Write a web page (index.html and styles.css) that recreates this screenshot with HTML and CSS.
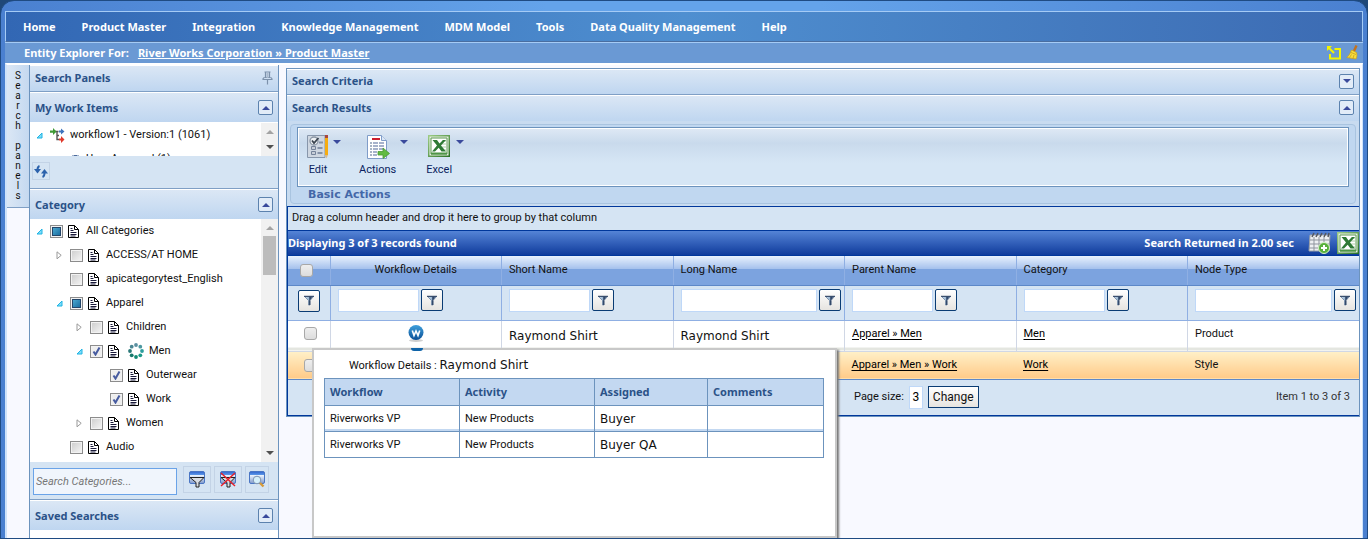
FILE: index.html
```html
<!DOCTYPE html>
<html lang="en">
<head>
<meta charset="utf-8">
<title>Entity Explorer</title>
<link rel="stylesheet" href="styles.css">
</head>
<body>
<svg class="defs" aria-hidden="true">
  <linearGradient id="gFunnel" x1="0" x2="1"><stop offset="0" stop-color="#c9dcee"/><stop offset=".45" stop-color="#9db8d2"/><stop offset=".6" stop-color="#1f3558"/><stop offset="1" stop-color="#8ba3c0"/></linearGradient>
  <linearGradient id="gBlue" x1="0" x2="0" y1="0" y2="1"><stop offset="0" stop-color="#3fa0dc"/><stop offset="1" stop-color="#0a4f96"/></linearGradient>
  <linearGradient id="gWin" x1="0" x2="0" y1="0" y2="1"><stop offset="0" stop-color="#2f62cc"/><stop offset=".3" stop-color="#5f9bea"/><stop offset=".32" stop-color="#eaf2fd"/><stop offset="1" stop-color="#7f98ca"/></linearGradient>
  <linearGradient id="gXl" x1="0" x2="1" y1="0" y2="1"><stop offset="0" stop-color="#9ccb85"/><stop offset="1" stop-color="#2c7327"/></linearGradient>
  <symbol id="doc" viewBox="0 0 11 13"><path d="M.5.5h6l4 4v8H.5z" fill="#fff" stroke="#000"/><path d="M6.500.5v4h4" fill="none" stroke="#000"/><path d="M2.500 3.500h2M2.500 5.500h3M2.500 7.500h6M2.500 9.500h6M2.500 11h5" stroke="#1a1a3a"/></symbol>
  <symbol id="open" viewBox="0 0 7 7"><path d="M6 1v5H1z" fill="#7fdcf8" stroke="#1fb4e4"/></symbol>
  <symbol id="closed" viewBox="0 0 7 9"><path d="M1 .8v7L5.200 4.300z" fill="#fff" stroke="#999"/></symbol>
  <symbol id="funnel" viewBox="0 0 12 11"><path d="M1.500 1.500h9L7 5.500V10H5.500V5.500z" fill="url(#gFunnel)" stroke="#5d7696" stroke-width=".7"/><path d="M1 1.300h10M6.800 5.500V10" stroke="#2a3f60"/></symbol>
  <symbol id="up" viewBox="0 0 8 4"><path d="M0 4l4-4 4 4z" fill="#3a4a9c"/></symbol>
  <symbol id="down" viewBox="0 0 8 4"><path d="M0 0h8L4 4z" fill="#3a4a9c"/></symbol>
  <symbol id="excel" viewBox="0 0 22 22"><path d="M.7.7h20.600v20.600H.7z" fill="#e5efe0" stroke="url(#gXl)" stroke-width="1.500"/><path d="M3 3h16v16H3z" fill="#fff" stroke="#5f9a55"/><path d="M14 6h5M14 9h5M14 12h5M14 15h5" stroke="#b0cfa8"/><path d="M4.500 5h4.500l2.500 3.500L15 5h3l-5 5.500 5 6h-4.500l-2.800-3.700L7 16.500H4l5-6z" fill="#2f7a35"/><path d="M3 17.500h16v2H3z" fill="#4e9547"/></symbol>
  <symbol id="win" viewBox="0 0 16 16"><rect x=".5" y=".5" width="15" height="12" rx="1.500" fill="url(#gWin)" stroke="#4a76c4"/></symbol>
  <symbol id="w" viewBox="0 0 16 17"><ellipse cx="8" cy="15.500" rx="7" ry="1.500" fill="#cfcfcf"/><circle cx="8" cy="7.500" r="7.500" fill="url(#gBlue)"/><path d="M4.300 5.500l1.700 5 2-4.500 2 4.500 1.700-5" fill="none" stroke="#fff" stroke-width="1.600"/></symbol>
</svg>

<div class="frame">
  <nav class="menu">
    <a href="#">Home</a><a href="#">Product Master</a><a href="#">Integration</a><a href="#">Knowledge Management</a><a href="#">MDM Model</a><a href="#">Tools</a><a href="#">Data Quality Management</a><a href="#">Help</a>
  </nav>
  <div class="crumbs">
    <span>Entity Explorer For:</span>
    <a href="#">River Works Corporation » Product Master</a>
    <div class="crumb-tools">
      <button aria-label="Restore window"><svg width="16" height="16" viewBox="0 0 16 16"><path d="M8.500 4H14v9.500H4V9" fill="none" stroke="#f4f400" stroke-width="2"/><path d="M3 3l5 5" stroke="#f4f400" stroke-width="2"/><path d="M1 1h5L1 6z" fill="#f4f400"/></svg></button>
      <button aria-label="Clear"><svg width="13" height="16" viewBox="0 0 13 16"><path d="M10.500.5L8 6" stroke="#c4711c" stroke-width="2.400"/><path d="M5.500 5l5 2.500c.8 2 .5 4.500-.5 6.500L.8 12.500C3 10.500 4.500 8 5.500 5z" fill="#f6dc3c" stroke="#cfa013" stroke-width=".7"/><path d="M5 7.500L10 9.500M3.500 12.500l2-3M7 13.500l1-3.500" stroke="#b98a12" stroke-width=".6"/></svg></button>
    </div>
  </div>

  <div class="workspace">
    <button class="side-tab">S<br>e<br>a<br>r<br>c<br>h<br><br>p<br>a<br>n<br>e<br>l<br>s</button>

    <aside class="panels">
      <header class="bar pane-title"><h2>Search Panels</h2>
        <svg width="11" height="14" viewBox="0 0 11 14"><path d="M2.500 1h6M3.500 1.500v5M7.500 1.500v5M1 8.500c0-1.500 1-2 2-2h5c1 0 2 .5 2 2zM5.500 9v4.500" fill="none" stroke="#7c91ab" stroke-width="1.200"/><path d="M5.500 2v5" stroke="#a9bace" stroke-width="2"/></svg>
      </header>

      <header class="bar section"><h2>My Work Items</h2><button class="toggle" aria-label="Collapse My Work Items"><svg width="8" height="4"><use href="#up"/></svg></button></header>
      <div class="scroll work-items">
        <ul class="tree">
          <li><span class="arrow"><svg width="7" height="7"><use href="#open"/></svg></span><svg width="15" height="15" viewBox="0 0 15 15"><path d="M5 3.500h3.500M7 3.500v8h2M7 7.500h2" fill="none" stroke="#555" stroke-width="1.400"/><path d="M0 2.500h3V0l3.500 3.500L3 7V4.800H0z" fill="#3f9a35"/><path d="M9 2.500h2V.5l3.500 3L11 6.500v-2H9z" fill="#3f74bd"/><path d="M9 10.500h2V8l3.500 3.500L11 15v-2.500H9z" fill="#e03a2c"/></svg><span>workflow1 - Version:1 (1061)</span></li>
          <li class="l1"><span class="arrow"></span><svg width="11" height="13" viewBox="0 0 11 13"><path d="M2 4h7M5.500 2v10" stroke="#4b6a9c" stroke-width="3"/></svg><span>User Approval (1)</span></li>
        </ul>
        <div class="scrollbar"><svg width="8" height="4"><path d="M0 4l4-4 4 4z" fill="#a3a3a3"/></svg><svg width="8" height="4"><path d="M0 0h8L4 4z" fill="#505050"/></svg></div>
      </div>
      <div class="strip refresh"><button class="icon-button" aria-label="Refresh"><svg width="14" height="13" viewBox="0 0 14 13"><path d="M5.500 1C4 1.500 3.500 3 3.500 5" fill="none" stroke="#2c62ac" stroke-width="2"/><path d="M0 4h7L3.500 8.500z" fill="#2c62ac"/><path d="M8.500 12c1.500-.5 2-2 2-4" fill="none" stroke="#2c62ac" stroke-width="2"/><path d="M7 8.500h7L10.500 4z" fill="#2c62ac"/></svg></button></div>

      <header class="bar section"><h2>Category</h2><button class="toggle" aria-label="Collapse Category"><svg width="8" height="4"><use href="#up"/></svg></button></header>
      <div class="scroll categories">
        <ul class="tree">
          <li><span class="arrow"><svg width="7" height="7"><use href="#open"/></svg></span><input type="checkbox" class="partial" id="c1"><svg class="doc" width="11" height="13"><use href="#doc"/></svg><label for="c1">All Categories</label></li>
          <li class="l1"><span class="arrow"><svg width="7" height="9"><use href="#closed"/></svg></span><input type="checkbox" id="c2"><svg class="doc" width="11" height="13"><use href="#doc"/></svg><label for="c2">ACCESS/AT HOME</label></li>
          <li class="l1"><span class="arrow"></span><input type="checkbox" id="c3"><svg class="doc" width="11" height="13"><use href="#doc"/></svg><label for="c3">apicategorytest_English</label></li>
          <li class="l1"><span class="arrow"><svg width="7" height="7"><use href="#open"/></svg></span><input type="checkbox" class="partial" id="c4"><svg class="doc" width="11" height="13"><use href="#doc"/></svg><label for="c4">Apparel</label></li>
          <li class="l2"><span class="arrow"><svg width="7" height="9"><use href="#closed"/></svg></span><input type="checkbox" id="c5"><svg class="doc" width="11" height="13"><use href="#doc"/></svg><label for="c5">Children</label></li>
          <li class="l2"><span class="arrow"><svg width="7" height="7"><use href="#open"/></svg></span><input type="checkbox" id="c6" checked><svg class="doc" width="11" height="13"><use href="#doc"/></svg><svg class="spinner" width="16" height="16" viewBox="0 0 16 16"><g fill="#2b8a86"><circle cx="8" cy="2" r="1.900" fill="#5a8fa0"/><circle cx="12.300" cy="3.700" r="1.900" fill="#4c98a0"/><circle cx="14" cy="8" r="1.900" fill="#2b9d9d"/><circle cx="12.300" cy="12.300" r="1.900" fill="#1c9a88"/><circle cx="8" cy="14" r="1.900" fill="#128a74"/><circle cx="3.700" cy="12.300" r="1.900" fill="#167a6c"/><circle cx="2" cy="8" r="1.900" fill="#2a7878"/><circle cx="3.700" cy="3.700" r="1.900" fill="#4a8592"/></g></svg><label for="c6">Men</label></li>
          <li class="l3"><span class="arrow"></span><input type="checkbox" id="c7" checked><svg class="doc" width="11" height="13"><use href="#doc"/></svg><label for="c7">Outerwear</label></li>
          <li class="l3"><span class="arrow"></span><input type="checkbox" id="c8" checked><svg class="doc" width="11" height="13"><use href="#doc"/></svg><label for="c8">Work</label></li>
          <li class="l2"><span class="arrow"><svg width="7" height="9"><use href="#closed"/></svg></span><input type="checkbox" id="c9"><svg class="doc" width="11" height="13"><use href="#doc"/></svg><label for="c9">Women</label></li>
          <li class="l1"><span class="arrow"></span><input type="checkbox" id="c10"><svg class="doc" width="11" height="13"><use href="#doc"/></svg><label for="c10">Audio</label></li>
        </ul>
        <div class="scrollbar"><svg width="8" height="4"><path d="M0 4l4-4 4 4z" fill="#a3a3a3"/></svg><span class="thumb"></span><svg width="8" height="4"><path d="M0 0h8L4 4z" fill="#505050"/></svg></div>
      </div>
      <div class="strip search">
        <input type="text" placeholder="Search Categories..." aria-label="Search Categories">
        <button class="icon-button" aria-label="Filter"><svg width="16" height="17" viewBox="0 0 16 17"><use href="#win" width="16" height="16"/><path d="M1 6.500h14l-5 5V16H7v-4.500z" fill="#d9dde3" stroke="#222"/></svg></button>
        <button class="icon-button" aria-label="Clear filter"><svg width="16" height="17" viewBox="0 0 16 17"><use href="#win" width="16" height="16"/><path d="M1 6.500h14l-5 5V16H7v-4.500z" fill="#d9dde3" stroke="#222"/><path d="M1 2l14 13M15 2L1 15" stroke="#e8202a" stroke-width="1.500"/></svg></button>
        <button class="icon-button narrow" aria-label="Find"><svg width="16" height="17" viewBox="0 0 16 17"><use href="#win" width="16" height="16"/><circle cx="8" cy="9" r="3.800" fill="#d6f0fa" stroke="#7e93b0"/><path d="M11 12l3.500 3.500" stroke="#d59a3a" stroke-width="2.400"/></svg></button>
      </div>

      <header class="bar section"><h2>Saved Searches</h2><button class="toggle" aria-label="Collapse Saved Searches"><svg width="8" height="4"><use href="#up"/></svg></button></header>
      <div class="saved"></div>
    </aside>

    <main class="content">
      <section class="results">
        <header class="bar tight"><h2>Search Criteria</h2><button class="toggle" aria-label="Expand Search Criteria"><svg width="8" height="4"><use href="#down"/></svg></button></header>
        <header class="bar tight plain"><h2>Search Results</h2><button class="toggle" aria-label="Collapse Search Results"><svg width="8" height="4"><use href="#up"/></svg></button></header>
        <div class="ribbon">
          <div class="tools">
            <button class="tool"><svg width="22" height="24" viewBox="0 0 22 24"><path d="M.5.500h17.500v22H.5z" fill="#cfd7e1" stroke="#8796ab"/><circle cx="7" cy="6" r="4" fill="#eef1f4" stroke="#8b97a6" stroke-width="1.300"/><path d="M5 5.500l2 2.500 4.500-5" fill="none" stroke="#3a4450" stroke-width="1.800"/><path d="M4.500 11.500h4v3h-4zM4.500 16.500h4v3h-4z" fill="#c7ced8" stroke="#75839a"/><path d="M10.500 13h5M10.500 18h5M12 7.500h4" stroke="#8592a8" stroke-width="2"/><path d="M18 3h3v17h-3z" fill="#f6ac12"/><path d="M18 0h3v3h-3z" fill="#a8473f"/><path d="M18 20h3l-1.500 3.500z" fill="#d7b98a"/></svg><svg class="caret" width="8" height="4"><use href="#down"/></svg><span>Edit</span></button>
            <button class="tool"><svg width="24" height="24" viewBox="0 0 24 24"><path d="M1.500.5h14l5 5v18h-19z" fill="#fff" stroke="#7f9cc8"/><path d="M15.500.5v5h5" fill="#dce8f7" stroke="#7f9cc8"/><path d="M6 4h8" stroke="#cc1f2f" stroke-width="2"/><path d="M4 8h2M4 11h2M4 14h2M4 17h2M4 20h2" stroke="#51698c"/><path d="M7 8h5M13 8h5M7 11h5M13 11h5M7 14h5M13 14h5M7 17h4M7 20h4" stroke="#8b99ba" stroke-width="1.300"/><path d="M12 16.500h5v-3.500l6.500 5.500-6.500 5v-3.500h-5z" fill="#62bb43" stroke="#4b9a35" stroke-width=".8"/></svg><svg class="caret" width="8" height="4"><use href="#down"/></svg><span>Actions</span></button>
            <button class="tool"><svg width="22" height="22"><use href="#excel"/></svg><svg class="caret" width="8" height="4"><use href="#down"/></svg><span>Excel</span></button>
          </div>
          <div class="ribbon-label">Basic Actions</div>
        </div>

        <div class="grid">
          <div class="group-hint">Drag a column header and drop it here to group by that column</div>
          <div class="summary">
            <span>Displaying 3 of 3 records found</span>
            <span class="timing">Search Returned in 2.00 sec</span>
            <button aria-label="Add columns"><svg width="24" height="22" viewBox="0 0 24 22"><path d="M2 3h20l-1 16H1z" fill="#eef0f2" stroke="#9aa0a8"/><path d="M1.500 8h20M1.500 12h20M1 16h20M6 5v14M11 5v14M16 5v14" stroke="#8f959e"/><path d="M4 5l2-4M8 5l2-4M12 5l2-4M16 5l2-4M20 5l1-4" stroke="#55585e" stroke-width="1.500"/><circle cx="16" cy="16" r="5.500" fill="#58b03c" stroke="#d6efc8"/><path d="M16 13v6M13 16h6" stroke="#fff" stroke-width="2"/></svg></button>
            <button aria-label="Export to Excel"><svg width="22" height="22"><use href="#excel"/></svg></button>
          </div>
          <table class="records">
            <colgroup><col class="pick"><col><col><col><col><col><col></colgroup>
            <thead>
              <tr>
                <th class="mid all"><input type="checkbox" class="soft" aria-label="Select all"></th>
                <th class="mid">Workflow Details</th><th>Short Name</th><th>Long Name</th><th>Parent Name</th><th>Category</th><th>Node Type</th>
              </tr>
              <tr class="filters">
                <td><button class="funnel" aria-label="Filter"><svg width="12" height="11"><use href="#funnel"/></svg></button></td>
                <td><div class="filter"><input type="text" aria-label="Filter Workflow Details"><button class="funnel" aria-label="Filter"><svg width="12" height="11"><use href="#funnel"/></svg></button></div></td>
                <td><div class="filter"><input type="text" aria-label="Filter Short Name"><button class="funnel" aria-label="Filter"><svg width="12" height="11"><use href="#funnel"/></svg></button></div></td>
                <td><div class="filter wide"><input type="text" aria-label="Filter Long Name"><button class="funnel" aria-label="Filter"><svg width="12" height="11"><use href="#funnel"/></svg></button></div></td>
                <td><div class="filter"><input type="text" aria-label="Filter Parent Name"><button class="funnel" aria-label="Filter"><svg width="12" height="11"><use href="#funnel"/></svg></button></div></td>
                <td><div class="filter"><input type="text" aria-label="Filter Category"><button class="funnel" aria-label="Filter"><svg width="12" height="11"><use href="#funnel"/></svg></button></div></td>
                <td><div class="filter wide"><input type="text" aria-label="Filter Node Type"><button class="funnel" aria-label="Filter"><svg width="12" height="11"><use href="#funnel"/></svg></button></div></td>
              </tr>
            </thead>
            <tbody>
              <tr class="row">
                <td class="mid pick-cell"><input type="checkbox" class="soft" aria-label="Select row 1"></td>
                <td class="mid"><svg width="16" height="17"><use href="#w"/></svg></td>
                <td class="name">Raymond Shirt</td><td class="name">Raymond Shirt</td>
                <td><a href="#">Apparel » Men</a></td><td><a href="#">Men</a></td><td>Product</td>
              </tr>
              <tr class="row selected">
                <td class="mid pick-cell"><input type="checkbox" class="soft" aria-label="Select row 2"></td>
                <td></td><td></td><td></td>
                <td><a href="#">Apparel » Men » Work</a></td><td><a href="#">Work</a></td><td>Style</td>
              </tr>
            </tbody>
          </table>
          <div class="pager">
            <label for="size">Page size:</label><input type="text" id="size" value="3"><button>Change</button>
            <span class="count">Item 1 to 3 of 3</span>
          </div>
        </div>
      </section>

      <div class="popup">
        <span class="pointer"></span>
        <p>Workflow Details : <span class="big">Raymond Shirt</span></p>
        <table>
          <colgroup><col class="a"><col class="a"><col class="b"><col></colgroup>
          <thead><tr><th>Workflow</th><th>Activity</th><th>Assigned</th><th>Comments</th></tr></thead>
          <tbody>
            <tr><td>Riverworks VP</td><td>New Products</td><td class="big">Buyer</td><td></td></tr>
            <tr><td>Riverworks VP</td><td>New Products</td><td class="big">Buyer QA</td><td></td></tr>
          </tbody>
        </table>
      </div>
    </main>
  </div>
</div>
</body>
</html>
```
FILE: styles.css
```css
* { box-sizing: border-box; }

:root {
  --ui: Roboto, Tahoma, sans-serif;
  --strong: "Noto Sans", Tahoma, sans-serif;
  --wide: "DejaVu Sans", Verdana, sans-serif;
  --navy: #2b5288;
  --line: #6c93bd;
  --deep: #00379b;
  --pale: #d5e4f3;
}

body {
  margin: 0;
  background: #1f4878;
  font-family: var(--ui);
  font-size: 11px;
  line-height: 16px;
  color: #111;
}

svg { display: block; flex: none; }
.defs { position: absolute; width: 0; height: 0; }
h2 { margin: 0; font: bold 11px/16px var(--strong); }
button { padding: 0; border: 0; background: none; font: inherit; color: inherit; }
input { margin: 0; font: inherit; }
table { border-collapse: collapse; table-layout: fixed; width: 100%; }

.frame {
  display: flex;
  flex-direction: column;
  min-height: 100vh;
  padding: 10px 4px 0;
  border: 1px solid #1f4b83;
  border-radius: 14px 14px 0 0;
  background: linear-gradient(90deg, #4a80d0, #64a3ea 40%, #64a3ea 60%, #4a80d0);
  overflow: hidden;
}

.menu {
  display: flex;
  align-items: center;
  height: 31px;
  padding: 0 4px;
  border: 1px solid #a5cbf5;
  border-bottom-color: #4a6ea0;
  background: linear-gradient(90deg, #3267b4, #4f8fd0 50%, #3c6bb3);
}
.menu a {
  padding: 0 13px;
  color: #fff;
  font: bold 11px/16px var(--strong);
  text-decoration: none;
}

.crumbs {
  display: flex;
  align-items: center;
  gap: 9px;
  height: 21px;
  padding: 0 4px 1px 19px;
  border-top: 1px solid #a5cbf5;
  background: #6a99d4;
  color: #fff;
  font: bold 11px/16px var(--strong);
}
.crumbs a { color: #fff; }
.crumb-tools { display: flex; gap: 4px; margin-left: auto; }

.workspace {
  display: flex;
  flex: 1;
  border: solid #cfe3fa;
  border-width: 0 1px 0 2px;
  border-top: 2px solid #fff;
  background: #f8f9ff;
}

.side-tab {
  align-self: flex-start;
  flex: none;
  width: 22px;
  padding: 6px 0;
  border-bottom: 1px solid #7f9fc5;
  background: linear-gradient(90deg, #dbe7f5, #c5d9f0);
  font-size: 10px;
  line-height: 10px;
}

.panels {
  display: flex;
  flex-direction: column;
  flex: none;
  width: 250px;
  border: solid var(--line);
  border-width: 0 1px;
  background: #fff;
}

.bar {
  display: flex;
  align-items: center;
  justify-content: space-between;
  height: 26px;
  padding: 0 5px;
  border-top: 1px solid #fff;
  border-bottom: 1px solid #7f9fc5;
  background: linear-gradient(#dbe7f5, #bfd6f0);
  color: var(--navy);
}
.bar.pane-title { height: 27px; padding-bottom: 2px; }
.bar.tight { padding-bottom: 2px; }
.bar.section { height: 30px; border-bottom: 0; }
.bar.plain { border-bottom: 0; }
.toggle {
  display: flex;
  align-items: center;
  justify-content: center;
  width: 15px;
  height: 15px;
  border: 1px solid #5c82ae;
  border-radius: 2px;
  background: #e2ecf8;
}

.scroll { display: flex; overflow: hidden; }
.work-items { height: 34px; padding-top: 1px; }
.categories { height: 243px; }
.tree { flex: 1; margin: 0; padding: 0; list-style: none; }
.tree li { display: flex; align-items: center; height: 24px; white-space: nowrap; }
.tree li > :last-child { margin-left: 5px; }
.tree .doc + label { margin-left: 7px; }
.tree .l1 { padding-left: 20px; }
.tree .l2 { padding-left: 40px; }
.tree .l3 { padding-left: 60px; }
.arrow { display: flex; flex: none; width: 20px; padding-left: 6px; }
.doc { margin-left: 5px; }
.spinner { margin-left: 9px; }

input[type="checkbox"] {
  appearance: none;
  flex: none;
  width: 13px;
  height: 13px;
  border: 1px solid #8c8c8c;
  background: linear-gradient(135deg, #ccc, #f6f6f6);
  box-shadow: inset 0 0 0 1px #f2f2f2;
}
input[type="checkbox"]:checked {
  background: url("data:image/svg+xml,%3Csvg xmlns='http://www.w3.org/2000/svg' viewBox='0 0 11 11'%3E%3Cpath d='M2.500 5.500l2 3 4-7' fill='none' stroke='%23465ba0' stroke-width='2'/%3E%3C/svg%3E") center / 11px, #eee;
}
input[type="checkbox"].partial {
  background: linear-gradient(135deg, #59b8dd, #0d5f94);
  box-shadow: inset 0 0 0 1px #f2f2f2, inset 0 0 0 2px #23466a;
}
input[type="checkbox"].soft {
  border-color: #a8a8a8;
  border-radius: 3px;
  background: linear-gradient(#eee, #ddd);
  box-shadow: none;
}

.scrollbar {
  display: flex;
  flex-direction: column;
  align-items: center;
  width: 17px;
  padding: 7px 0;
  background: #f1f1f1;
}
.scrollbar > :last-child { margin-top: auto; }
.thumb { width: 13px; height: 39px; margin-top: 6px; background: #bcbcbc; }

.strip {
  display: flex;
  background: var(--pale);
  border-bottom: 1px solid #7f9fc5;
}
.strip.refresh { height: 33px; padding: 6px 2px; }
.strip.search { gap: 3px; height: 38px; padding: 4px 3px; }
.icon-button {
  display: flex;
  align-items: center;
  justify-content: center;
  width: 28px;
  height: 27px;
  border: 1px solid #c3d3e6;
}
.refresh .icon-button { width: 18px; height: 18px; }
.icon-button.narrow { width: 24px; }
.search input {
  width: 144px;
  height: 27px;
  margin: 2px 3px 0 0;
  padding: 0 2px;
  border: 1px solid #6aa3e8;
  background: #f0f5fc;
}
.search input::placeholder { color: #777; font-style: italic; opacity: 1; }
.saved { flex: 1; }

.content {
  position: relative;
  flex: 1;
  min-width: 0;
  padding: 3px 2px 0 7px;
}
.results { border: 1px solid var(--line); background: #c8dbf0; }

.ribbon {
  margin: 3px 3px 2px;
  padding: 2px 6px 0;
  border: 1px solid #a9c4e0;
  border-radius: 4px;
  background: #c0d7f0;
}
.tools {
  display: flex;
  gap: 18px;
  height: 60px;
  padding: 7px 9px;
  border: 1px solid var(--line);
  background: linear-gradient(#dfe9f5, #c9daec 26%, #d6e6f5 60%);
  box-shadow: inset 0 0 0 1px #fff;
}
.tool {
  display: grid;
  grid-template-columns: auto 8px;
  grid-template-rows: 27px 18px;
  column-gap: 4px;
  justify-items: center;
  align-content: start;
  color: #0b1f60;
}
.tool .caret { margin-top: 5px; }
.ribbon-label {
  padding-left: 11px;
  color: #4468a8;
  font: bold 11px/16px var(--wide);
}

.grid {
  border: solid var(--deep);
  border-width: 1px 0 1px 1px;
  background: var(--pale);
}
.group-hint { height: 24px; padding: 3px 4px; border-bottom: 1px solid var(--deep); }
.summary {
  display: flex;
  align-items: center;
  gap: 5px;
  height: 25px;
  border-bottom: 1px solid var(--deep);
  background: linear-gradient(#5584d6, #0f3b9c);
  color: #fff;
  font: bold 11px/16px var(--strong);
}
.timing { margin: 0 9px 0 auto; }

.records .pick { width: 42px; }
.records th, .records td {
  padding: 0 7px;
  border-right: 1px solid #8fafe3;
  font-weight: normal;
  text-align: left;
}
.records th:last-child, .records td:last-child { border-right: 0; }
.records th {
  height: 29px;
  border-bottom: 1px solid #5d88c8;
  background: linear-gradient(#e8f1fd, #a4c0ec 45%, #7ca3df 46%, #7ca3df);
}
.records .mid { text-align: center; }
.records .mid > * { display: block; margin: 0 auto; }
.records .all { padding: 0 9px 0 5px; }
.records .filters td { height: 35px; padding: 0 3px 4px 7px; border-bottom: 1px solid #8fafe3; }
.records .filters td:first-child { padding-left: 10px; }
.filter { display: flex; gap: 2px; }
.filter input { width: 81px; height: 23px; border: 1px solid #bfd8f8; background: #fff; }
.filter.wide input { flex: 1; min-width: 0; }
.funnel {
  display: flex;
  align-items: center;
  justify-content: center;
  flex: none;
  width: 22px;
  height: 22px;
  border: 1px solid #0a3c74;
  border-radius: 2px;
  background: linear-gradient(#fff, #e6e4e0);
}
.records .row td {
  height: 31px;
  padding-bottom: 4px;
  border-color: #d0d7e5;
  border-bottom: 1px solid #d0d7e5;
  background: linear-gradient(#fff 90%, #e4e6e0 90%);
}
.records .row .pick-cell { padding-left: 10px; }
.records .row .name { padding-bottom: 0; font: 12px/16px var(--wide); }
.records a { color: #000; text-underline-offset: 2px; }
.records .selected td {
  height: 28px;
  padding-bottom: 0;
  border-right: 0;
  border-bottom-color: #5d88c8;
  background: linear-gradient(#fff0c8, #ffca88);
}

.pager { display: flex; align-items: center; gap: 5px; height: 35px; padding-left: 566px; }
.pager input {
  width: 14px;
  height: 23px;
  padding: 0;
  border: 1px solid #bfd8f8;
  text-align: center;
  font-size: 12px;
}
.pager button {
  height: 22px;
  padding: 0 4px;
  border: 1px solid #0a3c74;
  background: linear-gradient(#fff, #e6e4e0);
  font-size: 12px;
}
.count { margin: 0 9px 0 auto; color: #333; }

.popup {
  position: absolute;
  top: 283px;
  left: 33px;
  width: 525px;
  height: 190px;
  padding: 7px 11px 0 10px;
  border: 2px solid #c8c8c8;
  background: #fff;
  box-shadow: 2px 2px 2px #777;
}
.pointer {
  position: absolute;
  top: -2px;
  left: 97px;
  width: 12px;
  height: 3px;
  border-radius: 0 0 6px 6px;
  background: #0f63a8;
}
.popup p { margin: 0 0 4px 25px; }
.big { font: 12px/16px var(--wide); }
.popup .a { width: 135px; }
.popup .b { width: 113px; }
.popup th, .popup td {
  height: 26px;
  padding: 0 5px;
  border: 1px solid var(--line);
  text-align: left;
}
.popup th {
  height: 27px;
  background: #c3d8f1;
  color: var(--navy);
  font-family: var(--strong);
}
.popup tbody tr:first-child td { box-shadow: inset 0 -2px #c3d8f1; }
```
